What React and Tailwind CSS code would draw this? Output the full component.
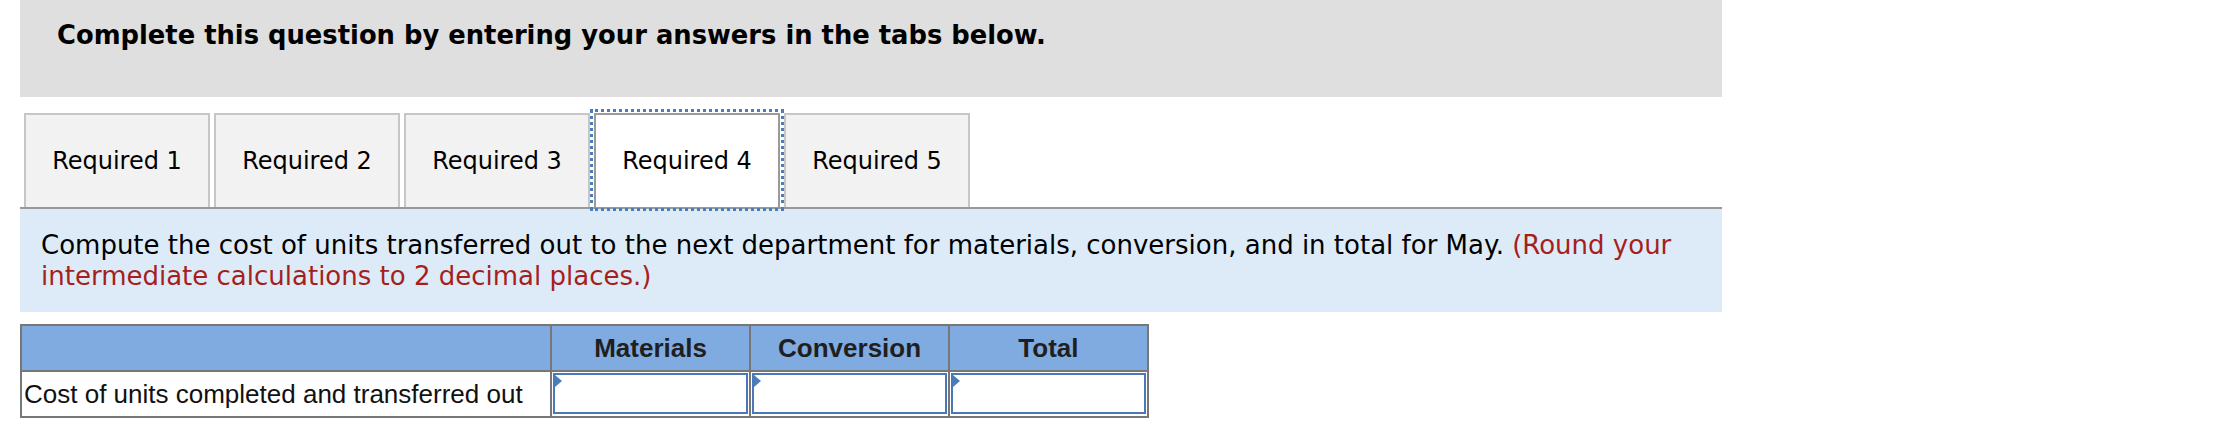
import React from "react";

const tabs = ["Required 1", "Required 2", "Required 3", "Required 4", "Required 5"];

function InputCell() {
  return (
    <td className="p-0 align-top border-2 border-[#777777] bg-white">
      <div className="relative mx-[1px] mt-[1px] h-[41px] border-2 border-[#4a78b8] bg-white">
        <div className="absolute left-0 top-0 w-0 h-0 border-t-[6px] border-b-[6px] border-l-[7px] border-t-transparent border-b-transparent border-l-[#4a7ebb]" />
      </div>
    </td>
  );
}

export default function App() {
  return (
    <div className="w-[2222px] h-[428px] bg-white overflow-hidden">
      <div className="ml-[20px] w-[1702px]">
        <div
          className="h-[97px] bg-[#dfdfdf] pl-[37px] pt-[20px] text-[25.8px] leading-[30px] font-bold text-black"
          style={{ fontFamily: '"DejaVu Sans", Verdana, sans-serif' }}
        >
          Complete this question by entering your answers in the tabs below.
        </div>

        <div
          className="mt-[16px] flex gap-[4px] pl-[4px] border-b-2 border-[#999999]"
          style={{ fontFamily: '"DejaVu Sans", Verdana, sans-serif' }}
        >
          {tabs.map((t, i) =>
            i === 3 ? (
              <div
                key={t}
                className="w-[186px] h-[94px] flex items-center justify-center bg-white border-2 border-b-0 border-[#9a9a9a] text-[24px] text-black outline-[3px] outline-dotted outline-offset-[1px] outline-[#4a7cc0]"
              >
                {t}
              </div>
            ) : (
              <div
                key={t}
                className="w-[186px] h-[94px] flex items-center justify-center bg-[#f2f2f2] border-2 border-b-0 border-[#c6c6c6] text-[24px] text-black"
              >
                {t}
              </div>
            )
          )}
        </div>

        <div
          className="h-[103px] bg-[#ddebf8] px-[21px] flex flex-col justify-center text-[26px] leading-[31px] text-black"
          style={{ fontFamily: '"DejaVu Sans", Verdana, sans-serif' }}
        >
          <div className="whitespace-nowrap">
            Compute the cost of units transferred out to the next department for materials, conversion, and in total for May.{" "}
            <span className="text-[#a61f1c]">(Round your</span>
          </div>
          <div className="whitespace-nowrap text-[#a61f1c]">intermediate calculations to 2 decimal places.)</div>
        </div>

        <table
          className="mt-[12px] border-collapse w-[1129px] border-2 border-[#777777]"
          style={{ fontFamily: '"Liberation Sans", Arial, sans-serif' }}
        >
          <thead>
            <tr className="bg-[#80abe0]">
              <th className="w-[530px] h-[46px] border-2 border-[#777777]"></th>
              <th className="w-[200px] h-[46px] border-2 border-[#777777] text-[26px] font-bold text-[#1f1f1f] text-center">
                Materials
              </th>
              <th className="w-[199px] h-[46px] border-2 border-[#777777] text-[26px] font-bold text-[#1f1f1f] text-center">
                Conversion
              </th>
              <th className="w-[200px] h-[46px] border-2 border-[#777777] text-[26px] font-bold text-[#1f1f1f] text-center">
                Total
              </th>
            </tr>
          </thead>
          <tbody>
            <tr>
              <td className="h-[46px] border-2 border-[#777777] pl-[2px] text-[26px] text-[#111111] whitespace-nowrap">
                Cost of units completed and transferred out
              </td>
              <InputCell />
              <InputCell />
              <InputCell />
            </tr>
          </tbody>
        </table>
      </div>
    </div>
  );
}
